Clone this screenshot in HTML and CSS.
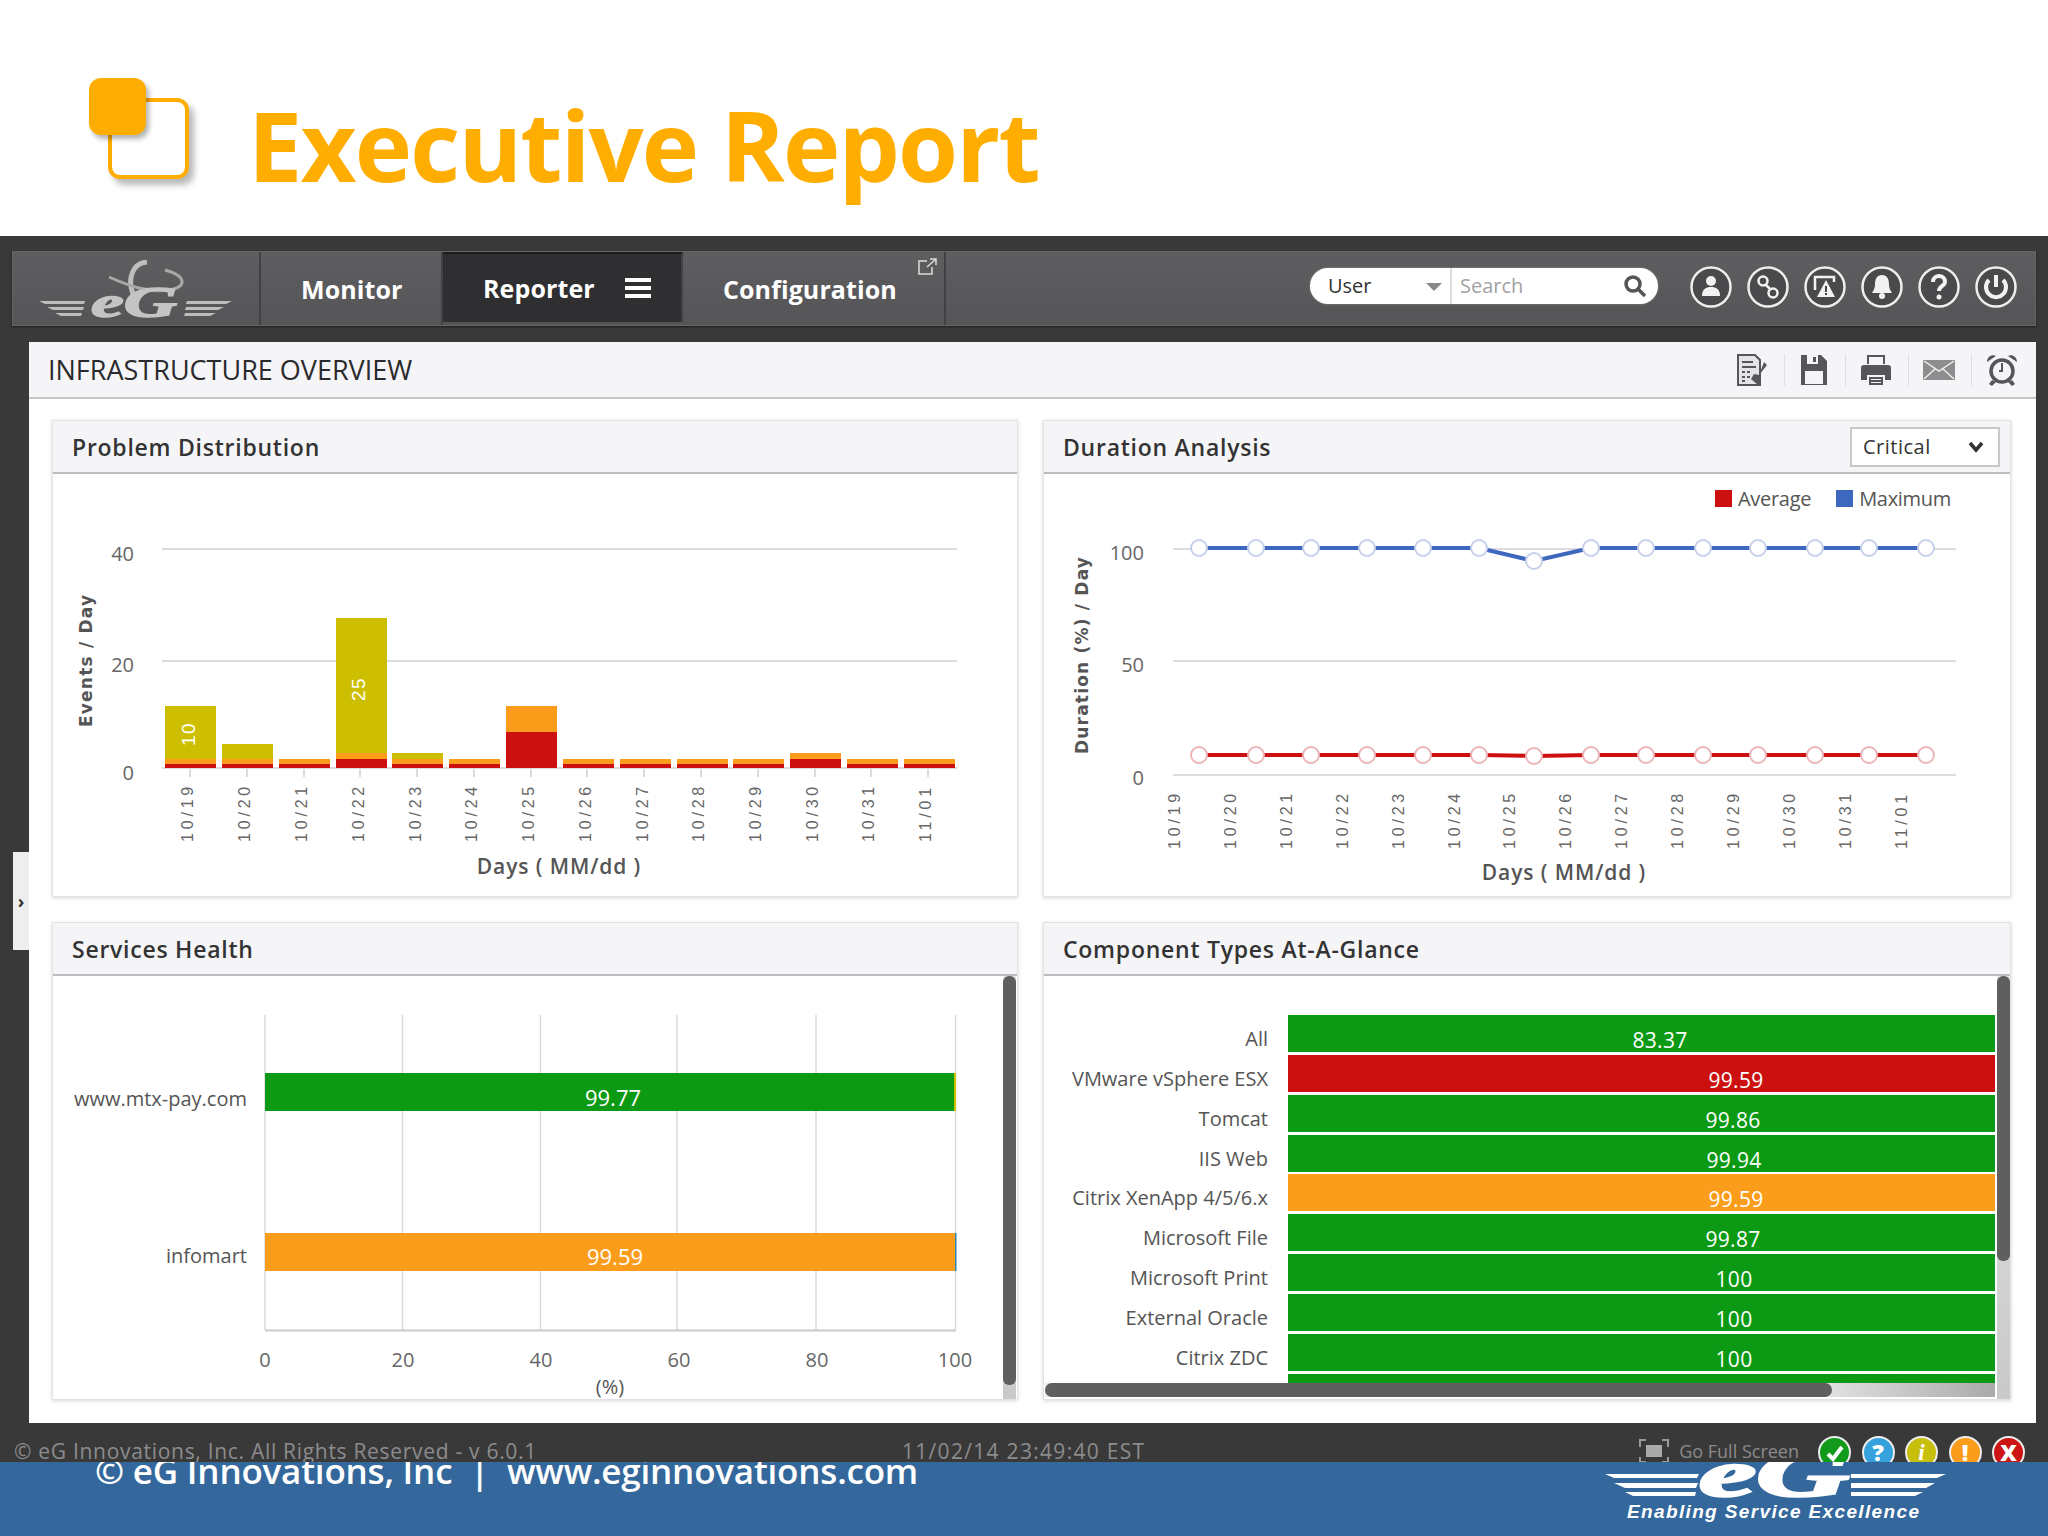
FILE: index.html
```html
<!DOCTYPE html>
<html lang="en">
<head>
<meta charset="utf-8">
<title>Executive Report</title>
<link rel="stylesheet" href="styles.css">
</head>
<body>
<div class="slide">
  <header class="slide-head">
    <div class="slide-mark"><span class="mark-outline"></span><span class="mark-fill"></span></div>
    <h1 class="slide-title">Executive Report</h1>
  </header>

  <div class="app">
    <nav class="nav">
      <div class="nav-logo">
        <svg class="nav-logo-svg" width="194" height="60" viewBox="0 0 194 60">
          <g class="logo-grey">
            <polygon points="0,41 46,41 45,44 6,44"/><polygon points="8,47 45,47 44,50 14,50"/><polygon points="16,53 43,53 42,56 22,56"/>
            <polygon points="148,41 193,41 187,44 147,44"/><polygon points="147,47 185,47 179,50 146,50"/><polygon points="146,53 177,53 171,56 145,56"/>
          </g>
          <path class="logo-swoosh" d="M108 2C94 3 88 18 94 34"/>
          <path class="logo-swoosh-thin" d="M70 17C90 26 110 33 130 30 148 27 148 16 126 10"/>
          <text class="logo-eg" x="52" y="57" textLength="86" lengthAdjust="spacingAndGlyphs">eG</text>
        </svg>
      </div>
      <a class="nav-item nav-monitor">Monitor</a>
      <a class="nav-item nav-reporter is-active">Reporter
        <svg class="hamburger" width="26" height="20" viewBox="0 0 26 20"><path d="M0 0h26v4H0zM0 8h26v4H0zM0 16h26v4H0z"/></svg>
      </a>
      <a class="nav-item nav-config">Configuration
        <svg class="ext-link" width="20" height="17" viewBox="0 0 20 17"><path d="M9 3H1v13h13V9M9 9l9-8M12 1h6v6"/></svg>
      </a>
      <div class="nav-right">
        <div class="search">
          <div class="search-type">User<span class="search-caret"></span></div>
          <div class="search-input">Search
            <svg class="search-icon" width="24" height="24" viewBox="0 0 24 24"><circle cx="10" cy="10" r="7"/><path d="M15 15l7 7"/></svg>
          </div>
        </div>
        <div class="round-icons">
          <svg class="round" viewBox="0 0 42 42"><circle class="ring" cx="21" cy="21" r="19.5"/><circle class="glyph" cx="21" cy="15" r="5"/><path class="glyph" d="M12 30c0-7 4-9 9-9s9 2 9 9z"/></svg>
          <svg class="round" viewBox="0 0 42 42"><circle class="ring" cx="21" cy="21" r="19.5"/><circle class="glyph-line" cx="16" cy="15" r="4.5"/><circle class="glyph-line" cx="26" cy="27" r="4.5"/><path class="glyph-line" d="M18 18l6 6"/></svg>
          <svg class="round" viewBox="0 0 42 42"><circle class="ring" cx="21" cy="21" r="19.5"/><path class="glyph-line" d="M11 24V11h19v5"/><path class="glyph" d="M22 14l9 17H13z"/><path class="glyph-cut" d="M21 20h2v6h-2zM21 27h2v2h-2z"/></svg>
          <svg class="round" viewBox="0 0 42 42"><circle class="ring" cx="21" cy="21" r="19.5"/><path class="glyph" d="M21 9c5 0 7 4 7 9 0 5 2 7 3 9H11c1-2 3-4 3-9 0-5 2-9 7-9z"/><circle class="glyph" cx="21" cy="30" r="3"/></svg>
          <svg class="round" viewBox="0 0 42 42"><circle class="ring" cx="21" cy="21" r="19.5"/><path class="glyph-bold" d="M15 16c0-4 3-6 6-6s6 2 6 6c0 4-6 4-6 9"/><circle class="glyph" cx="21" cy="31" r="2.5"/></svg>
          <svg class="round" viewBox="0 0 42 42"><circle class="ring" cx="21" cy="21" r="19.5"/><path class="glyph-bold" d="M14 14a10 10 0 1 0 14 0M21 9v12"/></svg>
        </div>
      </div>
    </nav>

    <main class="main">
      <button class="side-handle" type="button">›</button>
      <div class="main-bar">
        <h2 class="main-title">INFRASTRUCTURE OVERVIEW</h2>
        <div class="tools">
          <svg class="tool" width="32" height="32" viewBox="0 0 32 32"><path class="t-line" d="M2 1h17l5 5v25H2z"/><path class="t-fill" d="M6 7h11v2H6zM6 12h14v2H6zM6 17h3v2H6zM11 17h3v2h-3zM6 22h3v2H6zM11 22h3v2h-3zM6 26h3v2H6z"/><path class="t-fill" d="M28 8l3 3-7 9 1 7-3 4-7-6 3-5 5 1z"/></svg>
          <i class="tool-sep"></i>
          <svg class="tool" width="30" height="32" viewBox="0 0 30 32"><path class="t-fill" d="M2 1h20l6 6v24H2z"/><path class="t-cut" d="M8 1h11v9H8zM6 17h18v13H6z"/><path class="t-fill" d="M14 3h3v5h-3z"/></svg>
          <i class="tool-sep"></i>
          <svg class="tool" width="32" height="32" viewBox="0 0 32 32"><path class="t-fill" d="M7 1h18v9H7zM4 11h24a3 3 0 0 1 3 3v12H25v-5H7v5H1V14a3 3 0 0 1 3-3zM9 23h14v8H9z"/><path class="t-cut" d="M9 3h14v7H9zM11 25h10v1H11zM11 28h10v1H11z"/></svg>
          <i class="tool-sep"></i>
          <svg class="tool" width="32" height="20" viewBox="0 0 32 20"><path class="t-soft" d="M0 0h32v20H0z"/><path class="t-cutline" d="M1 1l15 10L31 1M1 19l11-10M31 19L20 9"/></svg>
          <i class="tool-sep"></i>
          <svg class="tool" width="32" height="32" viewBox="0 0 32 32"><circle class="t-thick" cx="16" cy="17" r="11"/><path class="t-fill" d="M1 8c0-5 5-8 9-6zM31 8c0-5-5-8-9-6zM6 26l4 2-4 4-3-2zM26 26l-4 2 4 4 3-2zM15 9h2v9h-4v-2h2z"/></svg>
        </div>
      </div>

      <div class="panels">
        <section class="panel">
          <header class="panel-head"><h3 class="panel-title">Problem Distribution</h3></header>
          <div class="panel-body">
            <svg class="chart" width="964" height="423" viewBox="53 474 964 423">
              <g class="grid"><path d="M162 549H957M162 661H957M162 768H957"/></g>
              <g class="ticks"><path d="M190 769v8M247 769v8M304 769v8M360 769v8M417 769v8M474 769v8M531 769v8M587 769v8M644 769v8M701 769v8M758 769v8M815 769v8M871 769v8M928 769v8"/></g>
              <g class="c-olive">
                <rect x="165" y="706" width="51" height="53"/><rect x="222" y="744" width="51" height="15"/><rect x="336" y="618" width="51" height="135"/><rect x="392" y="753" width="51" height="6"/>
              </g>
              <g class="c-orange">
                <rect x="165" y="759" width="51" height="5"/><rect x="222" y="759" width="51" height="5"/><rect x="279" y="759" width="51" height="5"/><rect x="336" y="753" width="51" height="6"/><rect x="392" y="759" width="51" height="5"/><rect x="449" y="759" width="51" height="5"/><rect x="506" y="706" width="51" height="26"/><rect x="563" y="759" width="51" height="5"/><rect x="620" y="759" width="51" height="5"/><rect x="677" y="759" width="51" height="5"/><rect x="733" y="759" width="51" height="5"/><rect x="790" y="753" width="51" height="6"/><rect x="847" y="759" width="51" height="5"/><rect x="904" y="759" width="51" height="5"/>
              </g>
              <g class="c-red">
                <rect x="165" y="764" width="51" height="4"/><rect x="222" y="764" width="51" height="4"/><rect x="279" y="764" width="51" height="4"/><rect x="336" y="759" width="51" height="9"/><rect x="392" y="764" width="51" height="4"/><rect x="449" y="764" width="51" height="4"/><rect x="506" y="732" width="51" height="36"/><rect x="563" y="764" width="51" height="4"/><rect x="620" y="764" width="51" height="4"/><rect x="677" y="764" width="51" height="4"/><rect x="733" y="764" width="51" height="4"/><rect x="790" y="759" width="51" height="9"/><rect x="847" y="764" width="51" height="4"/><rect x="904" y="764" width="51" height="4"/>
              </g>
              <text class="bar-label" transform="translate(195 746) rotate(-90)">10</text>
              <text class="bar-label" transform="translate(365 701) rotate(-90)">25</text>
              <text class="num end" x="134" y="561">40</text><text class="num end" x="134" y="672">20</text><text class="num end" x="134" y="780">0</text>
              <text class="axis-title-v" transform="translate(92 727) rotate(-90)">Events / Day</text>
              <g class="date">
                <text transform="translate(193 842) rotate(-90)">10/19</text><text transform="translate(250 842) rotate(-90)">10/20</text><text transform="translate(307 842) rotate(-90)">10/21</text><text transform="translate(364 842) rotate(-90)">10/22</text><text transform="translate(421 842) rotate(-90)">10/23</text><text transform="translate(477 842) rotate(-90)">10/24</text><text transform="translate(534 842) rotate(-90)">10/25</text><text transform="translate(591 842) rotate(-90)">10/26</text><text transform="translate(648 842) rotate(-90)">10/27</text><text transform="translate(704 842) rotate(-90)">10/28</text><text transform="translate(761 842) rotate(-90)">10/29</text><text transform="translate(818 842) rotate(-90)">10/30</text><text transform="translate(874 842) rotate(-90)">10/31</text><text transform="translate(931 842) rotate(-90)">11/01</text>
              </g>
              <text class="axis-title middle" x="559" y="874">Days ( MM/dd )</text>
            </svg>
          </div>
        </section>

        <section class="panel">
          <header class="panel-head">
            <h3 class="panel-title">Duration Analysis</h3>
            <div class="select">Critical
              <svg width="16" height="12" viewBox="0 0 16 12"><path class="select-caret" d="M2 2l6 7 6-7"/></svg>
            </div>
          </header>
          <div class="panel-body">
            <div class="legend">
              <span class="legend-item"><i class="swatch swatch-red"></i>Average</span>
              <span class="legend-item"><i class="swatch swatch-blue"></i>Maximum</span>
            </div>
            <svg class="chart" width="966" height="423" viewBox="1044 474 966 423">
              <g class="grid"><path d="M1173 549H1956M1173 661H1956M1173 775H1956"/></g>
              <polyline class="line-blue" points="1199,548 1256,548 1311,548 1367,548 1423,548 1479,548 1534,561 1591,548 1646,548 1703,548 1758,548 1815,548 1869,548 1926,548"/>
              <polyline class="line-red" points="1199,755 1256,755 1311,755 1367,755 1423,755 1479,755 1534,756 1591,755 1646,755 1703,755 1758,755 1815,755 1869,755 1926,755"/>
              <g class="dot-blue">
                <circle cx="1199" cy="548" r="8"/><circle cx="1256" cy="548" r="8"/><circle cx="1311" cy="548" r="8"/><circle cx="1367" cy="548" r="8"/><circle cx="1423" cy="548" r="8"/><circle cx="1479" cy="548" r="8"/><circle cx="1534" cy="561" r="8"/><circle cx="1591" cy="548" r="8"/><circle cx="1646" cy="548" r="8"/><circle cx="1703" cy="548" r="8"/><circle cx="1758" cy="548" r="8"/><circle cx="1815" cy="548" r="8"/><circle cx="1869" cy="548" r="8"/><circle cx="1926" cy="548" r="8"/>
              </g>
              <g class="dot-red">
                <circle cx="1199" cy="755" r="8"/><circle cx="1256" cy="755" r="8"/><circle cx="1311" cy="755" r="8"/><circle cx="1367" cy="755" r="8"/><circle cx="1423" cy="755" r="8"/><circle cx="1479" cy="755" r="8"/><circle cx="1534" cy="756" r="8"/><circle cx="1591" cy="755" r="8"/><circle cx="1646" cy="755" r="8"/><circle cx="1703" cy="755" r="8"/><circle cx="1758" cy="755" r="8"/><circle cx="1815" cy="755" r="8"/><circle cx="1869" cy="755" r="8"/><circle cx="1926" cy="755" r="8"/>
              </g>
              <text class="num end" x="1144" y="560">100</text><text class="num end" x="1144" y="672">50</text><text class="num end" x="1144" y="785">0</text>
              <text class="axis-title-v" transform="translate(1088 754) rotate(-90)">Duration (%) / Day</text>
              <g class="date">
                <text transform="translate(1180 849) rotate(-90)">10/19</text><text transform="translate(1236 849) rotate(-90)">10/20</text><text transform="translate(1292 849) rotate(-90)">10/21</text><text transform="translate(1348 849) rotate(-90)">10/22</text><text transform="translate(1404 849) rotate(-90)">10/23</text><text transform="translate(1460 849) rotate(-90)">10/24</text><text transform="translate(1515 849) rotate(-90)">10/25</text><text transform="translate(1571 849) rotate(-90)">10/26</text><text transform="translate(1627 849) rotate(-90)">10/27</text><text transform="translate(1683 849) rotate(-90)">10/28</text><text transform="translate(1739 849) rotate(-90)">10/29</text><text transform="translate(1795 849) rotate(-90)">10/30</text><text transform="translate(1851 849) rotate(-90)">10/31</text><text transform="translate(1907 849) rotate(-90)">11/01</text>
              </g>
              <text class="axis-title middle" x="1564" y="880">Days ( MM/dd )</text>
            </svg>
          </div>
        </section>

        <section class="panel">
          <header class="panel-head"><h3 class="panel-title">Services Health</h3></header>
          <div class="panel-body">
            <svg class="chart" width="964" height="423" viewBox="53 976 964 423">
              <g class="grid-v"><path d="M265 1015V1330M402.500 1015V1330M540.500 1015V1330M677 1015V1330M816 1015V1330M955.500 1015V1330"/></g>
              <path class="baseline" d="M265 1330.500H956"/>
              <rect class="c-green" x="265" y="1073" width="689" height="38"/><rect class="c-olive" x="954" y="1073" width="2" height="38"/>
              <rect class="c-orange" x="265" y="1233" width="690" height="38"/><rect class="c-teal" x="955" y="1233" width="1.500" height="38"/>
              <text class="cat end" x="247" y="1106">www.mtx-pay.com</text><text class="cat end" x="247" y="1263">infomart</text>
              <text class="val middle" x="613" y="1106">99.77</text><text class="val middle" x="615" y="1265">99.59</text>
              <text class="num middle" x="265" y="1367">0</text><text class="num middle" x="403" y="1367">20</text><text class="num middle" x="541" y="1367">40</text><text class="num middle" x="679" y="1367">60</text><text class="num middle" x="817" y="1367">80</text><text class="num middle" x="955" y="1367">100</text>
              <text class="cat middle" x="610" y="1394">(%)</text>
            </svg>
            <div class="vscroll"><div class="vscroll-thumb vscroll-full"></div></div>
          </div>
        </section>

        <section class="panel">
          <header class="panel-head"><h3 class="panel-title">Component Types At-A-Glance</h3></header>
          <div class="panel-body">
            <div class="rows">
              <div class="row"><span class="row-label">All</span><span class="row-bar bar-green"><span class="row-val" style="margin-left:372px">83.37</span></span></div>
              <div class="row"><span class="row-label">VMware vSphere ESX</span><span class="row-bar bar-red"><span class="row-val" style="margin-left:448px">99.59</span></span></div>
              <div class="row"><span class="row-label">Tomcat</span><span class="row-bar bar-green"><span class="row-val" style="margin-left:445px">99.86</span></span></div>
              <div class="row"><span class="row-label">IIS Web</span><span class="row-bar bar-green"><span class="row-val" style="margin-left:446px">99.94</span></span></div>
              <div class="row"><span class="row-label">Citrix XenApp 4/5/6.x</span><span class="row-bar bar-orange"><span class="row-val" style="margin-left:448px">99.59</span></span></div>
              <div class="row"><span class="row-label">Microsoft File</span><span class="row-bar bar-green"><span class="row-val" style="margin-left:445px">99.87</span></span></div>
              <div class="row"><span class="row-label">Microsoft Print</span><span class="row-bar bar-green"><span class="row-val" style="margin-left:446px">100</span></span></div>
              <div class="row"><span class="row-label">External Oracle</span><span class="row-bar bar-green"><span class="row-val" style="margin-left:446px">100</span></span></div>
              <div class="row"><span class="row-label">Citrix ZDC</span><span class="row-bar bar-green"><span class="row-val" style="margin-left:446px">100</span></span></div>
              <div class="row"><span class="row-label"></span><span class="row-bar bar-green"></span></div>
            </div>
            <div class="vscroll vscroll-comp"><div class="vscroll-thumb"></div></div>
            <div class="hscroll"><div class="hscroll-thumb"></div></div>
          </div>
        </section>
      </div>
    </main>

    <div class="status">
      <span class="status-copy">© eG Innovations, Inc. All Rights Reserved - v 6.0.1</span>
      <span class="status-date">11/02/14 23:49:40 EST</span>
      <div class="status-right">
        <svg class="fullscreen" width="30" height="24" viewBox="0 0 30 24"><path class="fs-corner" d="M1 8V1h6M23 1h6v7M1 18v5h6M23 23h6v-5"/><rect class="fs-box" x="7" y="6" width="16" height="12"/></svg>
        <span class="status-full">Go Full Screen</span>
        <div class="lights">
          <span class="light light-green"><svg width="22" height="22" viewBox="0 0 22 22"><path d="M4 12l5 5 9-12" class="check"/></svg></span>
          <span class="light light-blue">?</span>
          <span class="light light-olive light-i">i</span>
          <span class="light light-orange">!</span>
          <span class="light light-red">X</span>
        </div>
      </div>
    </div>
  </div>

  <footer class="foot">
    <p class="foot-text">© eG Innovations, Inc &nbsp;|&nbsp; www.eginnovations.com</p>
    <svg class="foot-logo" width="341" height="74" viewBox="0 0 341 74">
      <g class="foot-wings">
        <polygon points="0,12 94,12 92,16 9,16"/><polygon points="9,21 93,21 91,26 20,26"/><polygon points="20,30 91,30 90,34 28,34"/>
        <polygon points="246,12 341,12 332,16 246,16"/><polygon points="246,21 330,21 321,26 246,26"/><polygon points="246,30 318,30 310,34 246,34"/>
      </g>
      <text class="foot-eg" x="94" y="34" textLength="150" lengthAdjust="spacingAndGlyphs">eG</text>
      <text class="foot-tag" x="22" y="56" textLength="292" lengthAdjust="spacing">Enabling Service Excellence</text>
    </svg>
  </footer>
</div>
</body>
</html>
```

FILE: styles.css
```css
* { box-sizing: border-box; }
html, body { margin: 0; padding: 0; }
body { background: #fff; font-family: "Open Sans", "Liberation Sans", sans-serif; }
.slide { width: 2048px; height: 1536px; display: flex; flex-direction: column; overflow: hidden; }

/* slide title */
.slide-head { height: 236px; flex: none; display: flex; align-items: flex-start; padding: 78px 0 0 89px; background: #fff; }
.slide-mark { position: relative; width: 100px; height: 101px; flex: none; }
.mark-outline { position: absolute; left: 19px; top: 20px; width: 81px; height: 81px; border: 4px solid #ffad00; border-radius: 12px; box-shadow: 5px 6px 6px rgba(0,0,0,.28); background: #fff; }
.mark-fill { position: absolute; left: 0; top: 0; width: 57px; height: 57px; border-radius: 12px; background: #ffad00; box-shadow: 3px 4px 5px rgba(0,0,0,.3); }
.slide-title { margin: 6px 0 0 59px; font-size: 97px; line-height: 120px; font-weight: 700; color: #ffad00; letter-spacing: -1.8px; white-space: nowrap; }

/* application frame */
.app { height: 1226px; flex: none; background: #3a393a; padding: 15px 12px 0; display: flex; flex-direction: column; overflow: hidden; }
.nav { height: 75px; flex: none; display: flex; align-items: stretch; background: linear-gradient(#5e5e60, #555557); border: 1px solid #666668; box-shadow: 0 1px 2px rgba(0,0,0,.5); }
.nav-logo { width: 248px; flex: none; padding: 8px 0 0 26px; border-right: 2px solid #414143; }
.nav-logo-svg { display: block; }
.logo-grey { fill: #bdbdbd; }
.logo-swoosh { fill: none; stroke: #bdbdbd; stroke-width: 5; }
.logo-swoosh-thin { fill: none; stroke: #a8a8a8; stroke-width: 3; }
.logo-eg { font-family: "Liberation Serif", serif; font-style: italic; font-weight: 700; font-size: 44px; fill: #c4c4c4; stroke: #c4c4c4; stroke-width: 1.5; }
.nav-item { display: flex; align-items: center; flex: none; color: #fff; font-size: 25px; font-weight: 700; border-right: 2px solid #414143; position: relative; letter-spacing: .1px; }
.nav-monitor { width: 182px; padding-left: 40px; }
.nav-reporter { width: 240px; padding-left: 40px; background: #2f2e30; border-top: 2px solid #1c1c1d; margin-bottom: 3px; }
.hamburger { margin-left: 30px; fill: #fff; }
.nav-config { width: 263px; padding-left: 40px; }
.ext-link { position: absolute; right: 6px; top: 6px; fill: none; stroke: #ddd; stroke-width: 1.5; }
.nav-right { margin-left: auto; display: flex; align-items: center; padding-right: 18px; }

.search { width: 348px; height: 36px; display: flex; border-radius: 18px; background: #fff; overflow: hidden; margin-top: -6px; box-shadow: 0 0 2px #999; }
.search-type { width: 142px; flex: none; display: flex; align-items: center; padding-left: 18px; font-size: 20px; color: #333; position: relative; border-right: 2px solid #ddd; }
.search-caret { position: absolute; right: 8px; top: 15px; border: 8px solid transparent; border-top-color: #888; border-bottom: 0; }
.search-input { flex: 1; display: flex; align-items: center; justify-content: space-between; padding: 0 11px 0 8px; font-size: 20px; color: #a2a2a2; }
.search-icon { fill: none; stroke: #555; stroke-width: 3.500; }
.round-icons { display: flex; gap: 15px; margin-left: 32px; margin-top: -4px; }
.round { width: 42px; height: 42px; display: block; }
.ring { fill: #4a4a4c; stroke: #eee; stroke-width: 2.500; }
.glyph { fill: #f2f2f2; }
.glyph-cut { fill: #444; }
.glyph-line { fill: none; stroke: #f2f2f2; stroke-width: 2.500; }
.glyph-bold { fill: none; stroke: #f2f2f2; stroke-width: 4; }

/* main area */
.main { position: relative; height: 1081px; flex: none; margin: 16px 0 0 17px; background: #fff; display: flex; flex-direction: column; }
.side-handle { position: absolute; left: -16px; top: 510px; width: 16px; height: 98px; padding: 0; border: 0; background: #eeeeef; color: #333; font: 700 18px "Open Sans", sans-serif; }
.main-bar { height: 57px; flex: none; display: flex; align-items: center; justify-content: space-between; padding: 0 18px 0 19px; background: #f5f5f7; border-bottom: 2px solid #c4c4c6; }
.main-title { margin: 0; font-size: 27px; font-weight: 400; color: #2a2a2c; white-space: nowrap; }
.tools { display: flex; align-items: center; }
.tool { display: block; }
.tool-sep { width: 1px; height: 32px; margin: 0 14px 0 16px; background: #dfdfe1; }
.t-fill { fill: #55555a; }
.t-line { fill: #e4e4e6; stroke: #55555a; stroke-width: 2; }
.t-cut { fill: #f5f5f7; }
.t-soft { fill: #8d8d90; }
.t-cutline { fill: none; stroke: #eee; stroke-width: 1.500; }
.t-thick { fill: #f5f5f7; stroke: #55555a; stroke-width: 3.500; }

.panels { flex: 1; display: grid; grid-template-columns: 966px 968px; grid-template-rows: 477px 478px; gap: 25px 25px; padding: 21px 25px 23px 23px; }
.panel { display: flex; flex-direction: column; background: #fff; border: 1px solid #e2e2e4; box-shadow: 0 1px 4px rgba(0,0,0,.16); min-height: 0; }
.panel-head { height: 53px; flex: none; display: flex; align-items: center; justify-content: space-between; padding: 0 10px 0 19px; background: #f5f5f7; border-bottom: 2px solid #bdbdc0; }
.panel-title { margin: 0; font-size: 23px; font-weight: 600; color: #333; letter-spacing: .75px; }
.panel-body { position: relative; flex: 1; min-height: 0; overflow: hidden; }
.select { width: 150px; height: 40px; display: flex; align-items: center; justify-content: space-between; padding: 0 14px 0 11px; background: #fff; border: 2px solid #c8c8ca; font-size: 20px; letter-spacing: .5px; color: #333; }
.select-caret { fill: none; stroke: #333; stroke-width: 3.500; }
.legend { position: absolute; left: 671px; top: 11px; display: flex; gap: 25px; font-size: 20px; color: #555; }
.legend-item { display: flex; align-items: center; letter-spacing: -.3px; }
.swatch { width: 17px; height: 17px; margin-right: 6px; }
.swatch-red { background: #cc1010; }
.swatch-blue { background: #3e67be; }

/* chart svg */
.chart { display: block; }
.grid path { stroke: #dcdce0; stroke-width: 2; fill: none; }
.ticks path { stroke: #cfcfd2; stroke-width: 1.500; fill: none; }
.grid-v path { stroke: #d9d9dc; stroke-width: 1.500; fill: none; }
.baseline { stroke: #c9c9cf; stroke-width: 2; fill: none; }
.c-olive { fill: #cdbf00; }
.c-orange { fill: #fb9d1b; }
.c-red { fill: #cc1010; }
.c-green { fill: #0c9a14; }
.c-teal { fill: #2a86b8; }
.bar-label { font: 400 19px "Liberation Sans", sans-serif; letter-spacing: 1.500px; fill: #fff; }
.num { font-size: 20px; fill: #666; }
.end { text-anchor: end; }
.middle { text-anchor: middle; }
.axis-title { font-size: 21px; font-weight: 600; fill: #555; letter-spacing: .9px; }
.axis-title-v { font: 700 17px "DejaVu Sans", sans-serif; fill: #555; letter-spacing: 1.2px; }
.date text { font: 400 16px "Liberation Sans", sans-serif; letter-spacing: 3.800px; fill: #666; }
.cat { font-size: 20px; fill: #555; }
.val { font-size: 22px; fill: #fff; }
.line-blue { fill: none; stroke: #3e67be; stroke-width: 4; }
.line-red { fill: none; stroke: #cc1010; stroke-width: 4; }
.dot-blue circle { fill: #fff; stroke: #c6d0ea; stroke-width: 2; }
.dot-red circle { fill: #fff; stroke: #ecb6b8; stroke-width: 2; }

/* scrollbars */
.vscroll { position: absolute; right: 1px; top: 0; width: 13px; height: 100%; background: linear-gradient(#e8e8e8, #c9c9c9); }
.vscroll-thumb { width: 100%; height: 285px; background: #5f5f60; border-radius: 6px; }
.vscroll-full { height: 409px; }
.vscroll-comp { right: 0; }
.hscroll { position: absolute; left: 1px; bottom: 2px; width: 950px; height: 14px; background: linear-gradient(90deg, #eee 78%, #aaa 100%); }
.hscroll-thumb { width: 787px; height: 100%; background: #5f5f60; border-radius: 7px; }

/* component rows */
.rows { height: 409px; width: 951px; overflow: hidden; padding-top: 39px; display: flex; flex-direction: column; gap: 2.850px; }
.row { flex: none; height: 37px; display: grid; grid-template-columns: 224px 707px; column-gap: 20px; }
.row-label { text-align: right; font-size: 20px; line-height: 48px; color: #555; white-space: nowrap; }
.row-bar { display: block; height: 37px; overflow: hidden; }
.bar-green { background: #0c9a14; }
.bar-red { background: #cc1010; }
.bar-orange { background: #fb9d1b; }
.row-val { display: block; width: max-content; transform: translateX(-50%); font-size: 21px; line-height: 50px; color: #fff; letter-spacing: .3px; }

/* status line */
.status { height: 39px; flex: none; display: flex; align-items: flex-start; padding: 15px 0 0 2px; color: #8c8c8c; font-size: 21px; line-height: 26px; overflow: hidden; }
.status-copy { width: 888px; flex: none; letter-spacing: .7px; }
.status-date { letter-spacing: 1.3px; }
.status-right { margin-left: auto; display: flex; align-items: flex-start; }
.fullscreen { margin-top: 1px; }
.fs-corner { fill: none; stroke: #999; stroke-width: 2; }
.fs-box { fill: #aaa; }
.status-full { margin-left: 10px; color: #8a8a8a; font-size: 18px; line-height: 26px; }
.lights { display: flex; gap: 10.500px; margin: -2px 11px 0 19px; }
.light { width: 33px; height: 33px; flex: none; display: flex; align-items: center; justify-content: center; border-radius: 50%; border: 2px solid #eee; color: #fff; font-size: 23px; font-weight: 800; line-height: 1; }
.light-green { background: #129a1a; }
.light-blue { background: #35a2de; }
.light-olive { background: #c7bf0c; }
.light-i { font-family: "Liberation Serif", serif; font-style: italic; }
.light-orange { background: #fb9d1b; }
.light-red { background: #cc1515; }
.check { fill: none; stroke: #fff; stroke-width: 4; }

/* slide footer */
.foot { height: 74px; flex: none; display: flex; justify-content: space-between; background: #34689c; overflow: hidden; color: #fff; padding: 0 102px 0 95px; }
.foot-text { margin: -14px 0 0; font-size: 35px; line-height: 46px; font-weight: 600; letter-spacing: -.2px; white-space: nowrap; }
.foot-logo { display: block; flex: none; }
.foot-wings { fill: #fff; }
.foot-eg { font-family: "Liberation Serif", serif; font-style: italic; font-weight: 700; font-size: 66px; fill: #fff; stroke: #fff; stroke-width: 2.500; }
.foot-tag { font: italic 700 19px "Liberation Sans", sans-serif; fill: #fff; }
```
